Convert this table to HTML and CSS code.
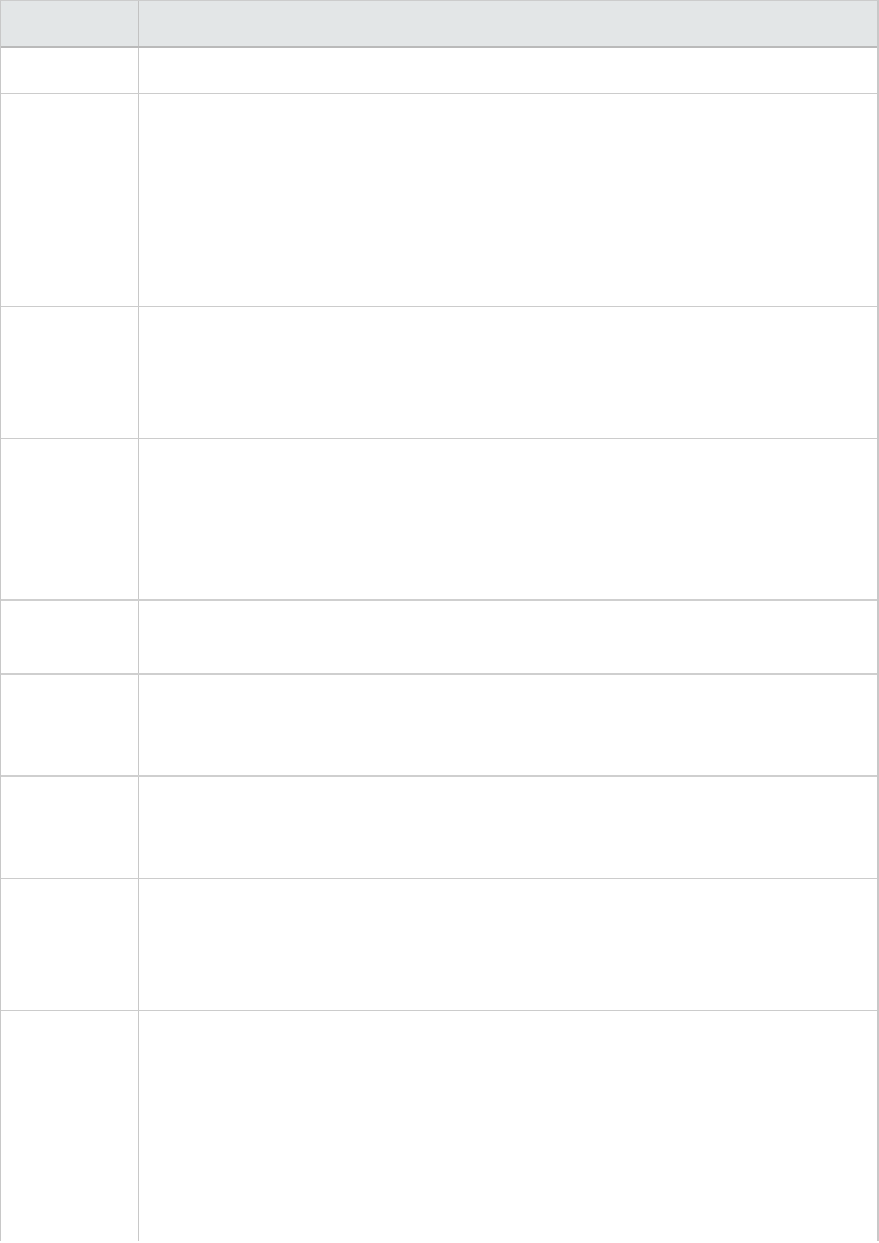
FILE: index.html
```html
<!DOCTYPE html>
<html>
  <head>
    <title>Table</title>
    <link rel="stylesheet" href="styles.css">
  </head>

  <body>
    <div class="grid-table">
      <div class="row head">
        <div class="cell key"></div>
        <div class="cell value"></div>
      </div>
      <div class="row h-1"><div class="cell key"></div><div class="cell value"></div></div>
      <div class="row h-2"><div class="cell key"></div><div class="cell value"></div></div>
      <div class="row h-3"><div class="cell key"></div><div class="cell value"></div></div>
      <div class="row h-4 thick"><div class="cell key"></div><div class="cell value"></div></div>
      <div class="row h-5 thick"><div class="cell key"></div><div class="cell value"></div></div>
      <div class="row h-6 thick"><div class="cell key"></div><div class="cell value"></div></div>
      <div class="row h-7"><div class="cell key"></div><div class="cell value"></div></div>
      <div class="row h-8"><div class="cell key"></div><div class="cell value"></div></div>
      <div class="row h-9 last"><div class="cell key"></div><div class="cell value"></div></div>
    </div>
  </body>
</html>
```

FILE: styles.css
```css
body {
  font-family: "Liberation Sans", Arial, sans-serif;
  margin: 0;
  padding: 0;
  background: #fff;
}

.grid-table {
  width: 879px;
  box-sizing: border-box;
  border-top: 1px solid #cccccc;
  border-left: 1px solid #c8c8c8;
  border-right: 2px solid #c8c8c8;
}

.row {
  display: flex;
  border-bottom: 1px solid #cccccc;
}

.row.thick {
  border-bottom: 2px solid #cfcfcf;
}

.row.last {
  border-bottom: none;
}

.cell.key {
  width: 137px;
  flex: none;
  border-right: 1px solid #c8c8c8;
}

.cell.value {
  flex: 1;
}

.head {
  height: 45px;
  background: #e3e6e7;
  border-bottom: 2px solid #bababa;
}

.head .cell.key {
  border-right-color: #c2c2c2;
}

.h-1 { height: 45px; }
.h-2 { height: 212px; }
.h-3 { height: 131px; }
.h-4 { height: 160px; }
.h-5 { height: 72px; }
.h-6 { height: 100px; }
.h-7 { height: 101px; }
.h-8 { height: 131px; }
.h-9 { height: 230px; }
```
